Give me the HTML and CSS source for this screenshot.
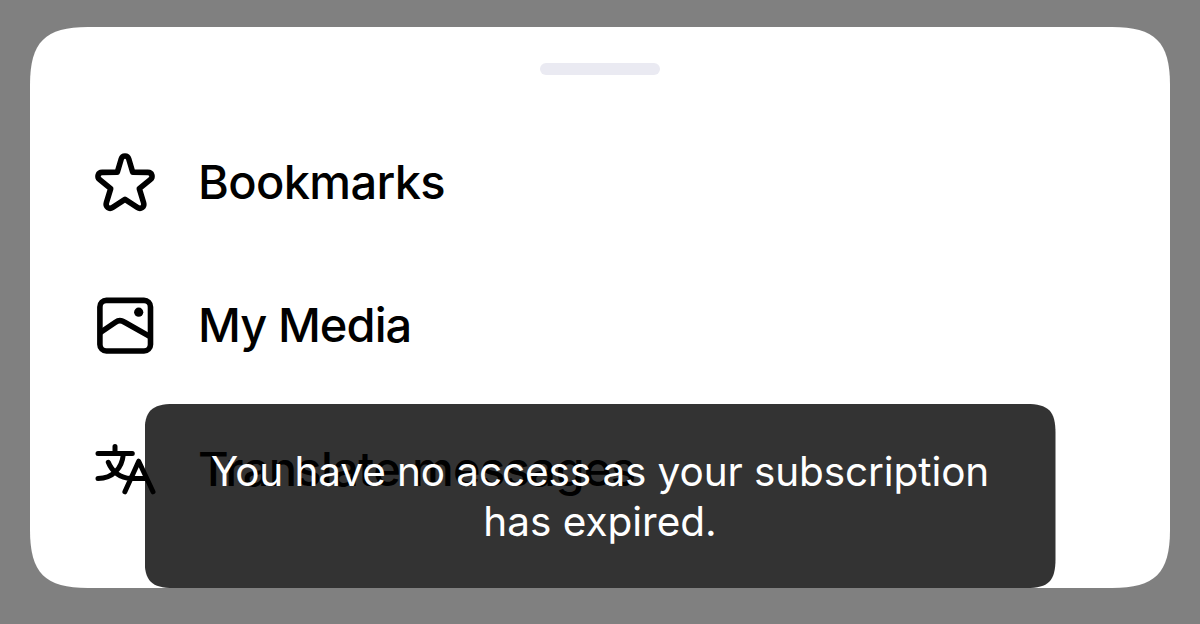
FILE: index.html
```html
<!DOCTYPE html>
<html lang="en">
<head>
<meta charset="utf-8">
<title>Menu</title>
<link rel="stylesheet" href="styles.css">
</head>
<body>
<main class="sheet">
  <div class="handle"></div>
  <nav class="menu">
    <a class="item">
      <svg class="icon" viewBox="0 0 60 60"><path d="M22.3 19.2 26.3 5.8C27.4 2.1 32.6 2.1 33.7 5.8L37.7 19.2 52.8 19.4C57.1 19.5 58.5 24 55.3 26.6L44.3 35.6 48.6 49.7C49.9 53.9 45.8 56.8 42.3 54.4L30 46.4 17.7 54.4C14.2 56.8 10.1 53.9 11.4 49.7L15.7 35.6 4.7 26.6C1.5 24 2.9 19.5 7.2 19.4Z"/></svg>
      <span class="label bookmarks">Bookmarks</span>
    </a>
    <a class="item">
      <svg class="icon" viewBox="0 0 60 60"><rect x="4.9" y="4.4" width="50.6" height="50.6" rx="6.5"/><path d="M5 36.8 20.5 26.2Q24.7 23.3 29.2 26L55.5 40.9"/><circle class="dot" cx="43.7" cy="16.2" r="4.6"/></svg>
      <span class="label media">My Media</span>
    </a>
    <a class="item">
      <svg class="icon thin" viewBox="0 0 60 60"><path d="M3 14.6H37.3M20 7.6V14M28.3 15.5C27 29 18 39.5 3 39.5M13.3 23.3C17 32.5 25 39.5 36 39.5H51M29.9 52.8 43.7 22.2 58 52.8"/></svg>
      <span class="label translate">Translate messages</span>
    </a>
  </nav>
  <div class="toast" role="status"><span class="first">You have no access as your subscription</span><span class="second">has expired.</span></div>
</main>
</body>
</html>
```
FILE: styles.css
```css
body {
  margin: 0;
  height: 624px;
  box-sizing: border-box;
  padding: 27px 30px 36px;
  overflow: hidden;
  background: #808080;
  font-family: Inter, "Liberation Sans", sans-serif;
}

.sheet {
  position: relative;
  height: 561px;
  background: #fff;
  clip-path: path("M58 0H1082C1125 0 1140 15 1140 58V503C1140 546 1125 561 1082 561H58C15 561 0 546 0 503V58C0 15 15 0 58 0Z");
  display: flex;
  flex-direction: column;
}

.handle {
  width: 120px;
  height: 12px;
  margin: 36px auto;
  flex: none;
  border-radius: 6px;
  background: #eaeaf2;
}

.menu {
  padding-left: 65px;
}

.item {
  display: flex;
  align-items: center;
  gap: 43px;
  height: 143px;
  color: #000;
}

.icon {
  width: 60px;
  height: 60px;
  flex: none;
  overflow: visible;
  fill: none;
  stroke: #000;
  stroke-width: 5.6;
  stroke-linejoin: round;
}

.thin {
  stroke-width: 5;
  stroke-linecap: round;
}

.dot {
  fill: #000;
  stroke: none;
}

.label {
  font-size: 47px;
  font-weight: 500;
  line-height: 56px;
  white-space: nowrap;
  letter-spacing: -0.65px;
}

.bookmarks {
  padding-bottom: 2px;
}

.media {
  padding-bottom: 1px;
  letter-spacing: -0.95px;
}

.toast {
  position: absolute;
  left: 114.5px;
  top: 377px;
  width: 911px;
  height: 184px;
  box-sizing: border-box;
  padding-top: 43px;
  display: flex;
  flex-direction: column;
  align-items: center;
  background: rgba(0, 0, 0, 0.8);
  clip-path: path("M29 0H882C904 0 911 7 911 29V155C911 177 904 184 882 184H29C7 184 0 177 0 155V29C0 7 7 0 29 0Z");
  color: #fff;
  font-size: 40.5px;
  line-height: 50px;
  white-space: nowrap;
}

.first {
  letter-spacing: -0.1px;
}
```
